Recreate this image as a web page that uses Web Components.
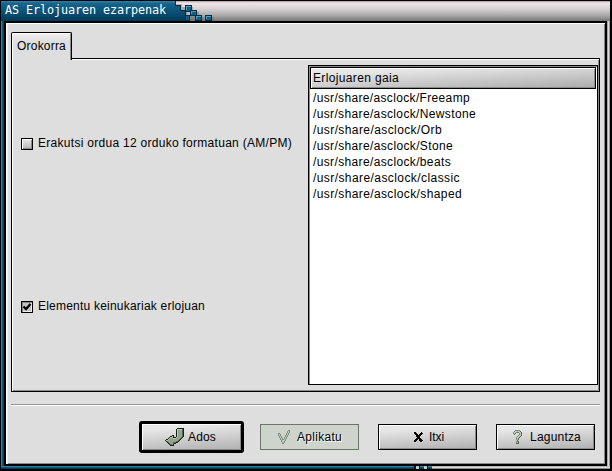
<!DOCTYPE html>
<html lang="eu"><head><meta charset="utf-8"><title>AS Erlojuaren ezarpenak</title>
<style>html,body{margin:0;background:#000;overflow:hidden}body{font:12px/16px "Liberation Sans",Arial,sans-serif;color:#000}</style></head>
<body>
<clock-window caption="AS Erlojuaren ezarpenak">
 <tab-panel label="Orokorra">
  <div slot="options" style="display:contents">
   <check-option width="254">Erakutsi ordua 12 orduko formatuan (AM/PM)</check-option>
   <check-option width="167" checked>Elementu keinukariak erlojuan</check-option>
  </div>
  <theme-list heading="Erlojuaren gaia">
   <fit-text width="157">/usr/share/asclock/Freeamp</fit-text>
   <fit-text width="163">/usr/share/asclock/Newstone</fit-text>
   <fit-text width="129">/usr/share/asclock/Orb</fit-text>
   <fit-text width="140">/usr/share/asclock/Stone</fit-text>
   <fit-text width="138">/usr/share/asclock/beats</fit-text>
   <fit-text width="147">/usr/share/asclock/classic</fit-text>
   <fit-text width="149">/usr/share/asclock/shaped</fit-text>
  </theme-list>
 </tab-panel>
 <push-button slot="actions" default style="--pad:23px;--gap:4px"><pixel-icon name="enter" slot="icon"></pixel-icon><fit-text width="28">Ados</fit-text></push-button>
 <push-button slot="actions" disabled style="--pad:17px;--gap:7px"><pixel-icon name="apply" slot="icon"></pixel-icon><fit-text width="45">Aplikatu</fit-text></push-button>
 <push-button slot="actions" style="--pad:35px;--gap:6px"><pixel-icon name="close" slot="icon"></pixel-icon><fit-text width="15">Itxi</fit-text></push-button>
 <push-button slot="actions" style="--pad:16px;--gap:8px"><pixel-icon name="help" slot="icon"></pixel-icon><fit-text width="51">Laguntza</fit-text></push-button>
</clock-window>
<script>
const define=(name,html,setup)=>customElements.define(name,class extends HTMLElement{
  connectedCallback(){
    if(this.shadowRoot)return;
    const t=document.createElement('template');t.innerHTML=html;
    this.attachShadow({mode:'open'}).append(t.content.cloneNode(true));
    if(setup)setup(this,this.shadowRoot);
  }
});
const fitted=(text,width)=>{
  const f=document.createElement('fit-text');
  f.setAttribute('width',width);f.textContent=text;return f;
};

// Text spread to an exact advance width
define('fit-text',`<style>:host{display:block;white-space:pre}span{display:inline-block}</style><span><slot></slot></span>`,(el,r)=>{
  const s=r.querySelector('span'),n=el.textContent.length;
  s.style.letterSpacing=(+el.getAttribute('width')-s.getBoundingClientRect().width)/n+'px';
});

const COLORS={K:'#182018',D:'#566452',M:'#94a48c',L:'#bcc8b4',G:'#7f8e7f',X:'#000'};
const ICONS={
enter:[
'............KKKKKKK',
'...........KLLLLLDK',
'...........KLMMMMDK',
'...........KLMMMMDK',
'...........KLMMMMDK',
'...........KLMMMMDK',
'...........KLMMMMDK',
'.......KK..KLMMMMDK',
'.....KKLK..KLMMMMDK',
'....KLLMKKKLMMMMDK.',
'...KLMMMLLLMMMMDK..',
'.KKLMMMMMMMMMMDK...',
'KLLMMMMMMMMMMDK....',
'.KDMMMMMMMMDDK.....',
'..KDMMMMDDDKK......',
'...KDMMMDKK........',
'....KDDMK..........',
'.....KKKK..........'],
apply:[
'..........GG',
'.........GLG',
'.........GLG',
'GG......GLG.',
'GLG.....GLG.',
'GLG....GLG..',
'.GLG...GLG..',
'.GLG..GLG...',
'..GLG.GLG...',
'..GLGGLG....',
'...GLLLG....',
'...GLLG.....',
'....GLG.....',
'....GG......'],
close:[
'XX.....X.',
'XXX...XXX',
'.XXX.XXX.',
'..XXXXX..',
'..XXXX...',
'...XXX...',
'..XXXXX..',
'.XXX.XXX.',
'XXX..XXXX',
'XX....XX.'],
help:[
'..GGGGG..',
'.GLLLLLD.',
'GLLGDGLLD',
'GLD...GLD',
'.D....GLD',
'.....GLLD',
'....GLLD.',
'...GLLD..',
'...GLD...',
'...GLD...',
'....D....',
'...GGD...',
'...GLD...',
'...DDD...']};
define('pixel-icon',`<style>:host{display:block;flex:none}svg{display:block}</style>`,(el,r)=>{
  const rows=ICONS[el.getAttribute('name')],w=rows[0].length,h=rows.length;let s='';
  rows.forEach((row,y)=>[...row].forEach((c,x)=>{if(c!='.')s+=`<rect x="${x}" y="${y}" width="1" height="1" fill="${COLORS[c]}"/>`}));
  const t=document.createElement('template');
  t.innerHTML=`<svg width="${w}" height="${h}" viewBox="0 0 ${w} ${h}" shape-rendering="crispEdges">${s}</svg>`;
  r.append(t.content);
});

define('check-option',`<style>
:host{display:flex;align-items:center;gap:5px;height:16px}
i{box-sizing:border-box;width:12px;height:12px;margin-top:1px;border:1px solid #000;box-shadow:inset 1px 1px #fff,inset -1px -1px #888;background:linear-gradient(#e8e8e8,#b4b4b4)}
:host([checked]) i{box-shadow:inset 1px 1px #888,inset -1px -1px #eee;background:#c4c4c4}
svg{display:none}:host([checked]) svg{display:block}
</style><i><svg width="10" height="10" viewBox="0 0 10 10"><path d="M1.500 4.500L4 7L8.500 2" fill="none" stroke="#000" stroke-width="2.3"/></svg></i>`,(el,r)=>r.append(fitted(el.textContent,el.getAttribute('width'))));

define('theme-list',`<style>
:host{display:block;box-sizing:border-box;width:290px;height:320px;background:#fff;border:1px solid #000;box-shadow:inset 1px 1px #8c8c8c}
header{box-sizing:border-box;height:22px;margin:1px 1px 0 1px;border:1px solid #000;padding:2px;box-shadow:inset 1px 1px #fff,inset -1px -1px #8a8a8a;background:linear-gradient(177deg,#e6e6e6 20%,#ababab)}
main{padding:1px 0 0 4px}
</style><header></header><main><slot></slot></main>`,(el,r)=>r.querySelector('header').append(fitted(el.getAttribute('heading'),86)));

define('tab-panel',`<style>
:host{display:grid;grid-template-rows:27px 333px;width:589px}
.tab{box-sizing:border-box;width:61px;height:28px;margin-bottom:-1px;z-index:1;border:1px solid #000;border-bottom:0;border-radius:2px 2px 0 0;padding:5px 0 0 5px;background:linear-gradient(#f5eff1,#dedede 9px);box-shadow:inset 1px 1px #fff,inset -1px 0 #8a8a8a}
.body{box-sizing:border-box;height:334px;margin-top:-1px;border:1px solid #000;background:#dedede;box-shadow:inset 1px 1px #fff,inset -1px -1px #8a8a8a;display:flex;justify-content:space-between;padding:6px 1px 0 9px}
.opts{display:flex;flex-direction:column;gap:147px;padding-top:70px}
</style><div class="tab"></div><div class="body"><div class="opts"><slot name="options"></slot></div><slot></slot></div>`,(el,r)=>r.querySelector('.tab').append(fitted(el.getAttribute('label'),49)));

define('push-button',`<style>
:host{display:flex;box-sizing:border-box;width:99px;height:26px;align-items:center;gap:var(--gap);padding-left:var(--pad);border:1px solid #000;box-shadow:inset 1px 1px #fff,inset -1px -1px #8a8a8a;background:linear-gradient(176deg,#e6e6e6 20%,#b0b0b0)}
:host([default]){width:105px;height:32px;border-width:3px;border-radius:3px;box-shadow:inset 1px 1px #fff,inset -1px -1px #8a8a8a;margin:0 -3px 0 -3px}
:host([disabled]){border-color:#6c756c;background:#ced3cb;box-shadow:none;text-shadow:1px 1px #fff}
</style><slot name="icon"></slot><slot></slot>`);

define('title-bar',`<style>
:host{display:block;height:20px;background:linear-gradient(#a89ea4,#f0e4e8 2px,#d6d0d3 8px,#a5a5a5 15px,#777)}
.blue{height:20px;width:215px;display:grid}
svg,h1{grid-area:1/1}
h1{margin:0;padding:0 0 0 4px;color:#fff;font:11.800px/18px "DejaVu Sans Mono",monospace}
</style><div class="blue"><svg width="215" height="20" shape-rendering="crispEdges"><defs><linearGradient id="g" x1="0" y1="0" x2="0" y2="1"><stop stop-color="#3682a5"/><stop offset=".12" stop-color="#14668f"/><stop offset="1" stop-color="#00395a"/></linearGradient></defs>
<path fill="#666" d="M175 3h6v3h11v5h6v5h5v4H188v-5h-3v-5h-6V6h-4zM210 16h3v4h-3z" opacity=".4"/>
<path fill="url(#g)" d="M0 0H175V4H180V9H185V14H189V20H0z"/>
<path fill="none" stroke="#002b44" d="M174.500 0V4.500H179.500V9.500H184.500V14.500"/>
<path fill="#bbb" d="M186 11h3v4h-3z"/>
<g fill="#0b6288" stroke="#002f49"><path d="M184.500 4.500h6v6h-6zM189.500 9.500h6v5h-6zM184.500 14.500h4v5h-4zM194.500 14.500h6v5h-6zM204.500 14.500h6v5h-6z"/></g>
<path stroke="#559abb" fill="none" d="M185.500 9V5.500h4M190.500 13v-2.500h4M195.500 18v-2.500h4M205.500 18v-2.500h4"/></svg><h1></h1></div>`,(el,r)=>
  r.querySelector('h1').append(fitted(el.getRootNode().host.getAttribute('caption'),161)));

define('clock-window',`<style>
:host{display:grid;box-sizing:border-box;width:612px;height:471px;background:#000;padding:1px 2px 2px 1px;grid-template:20px 1fr 3px/4px 1fr 4px}
title-bar{grid-area:1/1/2/4}
.left{background:linear-gradient(90deg,#367c9c 1px,#0b5c82 1px 2px,#00466b 2px 3px,#000 3px)}
.right{background:linear-gradient(90deg,#000 1px,#a8a8a8 1px 2px,#e1dde0 2px 3px,#999 3px)}
.bottom{grid-column:1/4;background:linear-gradient(#367c9c 1px,#0b5c82 1px 2px,#003755 2px);display:flex;padding-left:413px}
.bottom b{width:2px;background:#111}
.bottom s{width:3px;background:#c8c8c8;border-right:1px solid #111}
.bottom i{width:4px}
.bottom u{flex:1;background:linear-gradient(#b8b8b8 1px,#dedbdd 1px 2px,#8a8a8a 2px)}
.client{border:solid #000;border-width:2px 1px;background:#dedede;box-shadow:inset 1px 1px #fff,inset 2px 0 #f0eeef,inset -1px -1px #8a8a8a;padding:9px 0 0 5px;display:flex;flex-direction:column}
hr{margin:12px 0 0;border:0;width:589px;height:2px;background:linear-gradient(#969696 1px,#fff 1px)}
.buttons{display:flex;align-items:center;gap:19px;height:32px;padding:15px 0 0 131px}
</style><title-bar></title-bar><div class="left"></div><div class="client"><slot></slot><hr><div class="buttons"><slot name="actions"></slot></div></div><div class="right"></div><div class="bottom"><b></b><s></s><i></i><s></s><i></i><u></u></div>`);
</script></body></html>
